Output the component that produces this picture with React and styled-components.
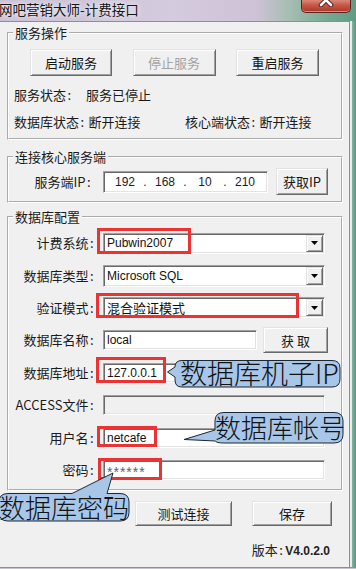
import React from 'react';
import styled, { createGlobalStyle, css } from 'styled-components';

const GlobalStyle = createGlobalStyle`
  html, body {
    margin: 0;
    padding: 0;
    background: #f0f0f0;
    overflow: hidden;
  }
`;

const ui = `"Noto Sans CJK SC", "Liberation Sans", sans-serif`;
const latin = `"Liberation Sans", "Noto Sans CJK SC", sans-serif`;

const Window = styled.div`
  width: 356px;
  height: 569px;
  display: flex;
  flex-direction: column;
  background: linear-gradient(90deg, #c7bed3 0%, #d5cbde 48%, #cec2d6 72%, #a7beb3 81%, #76a894 92%, #5f9c86 100%);
  font-family: ${ui};
  color: #1b1b1b;
  overflow: hidden;
`;

const TitleBar = styled.div`
  flex: none;
  height: 21px;
  display: flex;
  align-items: flex-start;
  justify-content: space-between;
`;

const Title = styled.div`
  margin: 1px 0 0 -1px;
  font-size: 13.5px;
  line-height: 17px;
  color: #161616;
  white-space: nowrap;
  text-shadow: 0 0 5px rgba(255, 255, 255, 0.9), 0 0 9px rgba(255, 255, 255, 0.7);
`;

const CloseButton = styled.div`
  width: 50px;
  height: 13px;
  margin-right: 5px;
  box-sizing: border-box;
  border: 1px solid #5e2520;
  border-top: none;
  border-radius: 0 0 5px 5px;
  background: linear-gradient(#d98878, #c65646 45%, #a83626);
  box-shadow: inset 0 -1px 0 rgba(255, 190, 170, 0.6);
  display: flex;
  justify-content: center;
  overflow: hidden;
`;

const Frame = styled.div`
  flex: 1;
  display: flex;
  min-height: 0;
`;

const Client = styled.div`
  width: 350px;
  box-sizing: border-box;
  background: #f0f0f0;
  border-top: 1px solid #8f8c9c;
  border-right: 1px solid #8f8c9c;
  padding-left: 7px;
`;

const SideFrame = styled.div`
  flex: 1;
  background: linear-gradient(90deg, #e8edeb 0 2px, #86b4a3 2px, #4e9880);
`;

const BottomFrame = styled.div`
  flex: none;
  height: 1px;
  border-top: 1px solid #8f8c9c;
  background: #c9c0d3;
`;

const Group = styled.fieldset`
  width: 336px;
  box-sizing: border-box;
  margin: ${p => p.$mt}px 0 0;
  padding: 0;
  min-width: 0;
  border: 2px groove #fff;
`;

const Legend = styled.legend`
  margin-left: 4px;
  padding: 0 2px;
  font-size: 13px;
  line-height: 16px;
`;

const ActionBar = styled.div`
  display: flex;
  gap: 20.5px;
  padding: 8px 0 0 21px;
`;

const Button = styled.button`
  width: ${p => p.$w}px;
  height: ${p => p.$h}px;
  box-sizing: border-box;
  padding: 0;
  margin: 0;
  font-family: ${ui};
  font-size: 13px;
  color: ${p => (p.disabled ? '#a3a3a3' : '#151515')};
  background: #f0f0f0;
  border: 1px solid;
  border-color: #e3e3e3 #696969 #696969 #e3e3e3;
  box-shadow: inset 1px 1px 0 #fff, inset -1px -1px 0 #a0a0a0;
  flex: none;
`;

const StatusRow = styled.div`
  display: flex;
  margin-top: ${p => p.$mt}px;
  padding-left: 5px;
  padding-bottom: ${p => p.$pb || 0}px;
  font-size: 13px;
  line-height: 20px;
  white-space: nowrap;
`;

const StatusCell = styled.span`
  width: ${p => (p.$w ? `${p.$w}px` : 'auto')};
  flex: none;
`;

const Colon = styled.span`
  display: inline-block;
  width: 6.5px;
  text-align: center;
  margin-right: ${p => p.$gap || 0}px;
`;

const IpRow = styled.div`
  display: flex;
  align-items: center;
  padding: 3px 0 6px;
`;

const FormLabel = styled.div`
  width: 86px;
  justify-self: stretch;
  box-sizing: border-box;
  padding-right: ${p => p.$pr || 0}px;
  text-align: right;
  font-size: 13px;
  line-height: 16px;
  white-space: nowrap;
`;

const sunken = css`
  box-sizing: border-box;
  border: 1px solid;
  border-color: #a0a0a0 #fff #fff #a0a0a0;
  box-shadow: inset 1px 1px 0 #696969, inset -1px -1px 0 #e3e3e3;
  padding: 1px;
`;

const IpBox = styled.div`
  ${sunken}
  width: 165px;
  height: 22px;
  margin-left: 8px;
  padding-left: 6px;
  display: flex;
  align-items: center;
  background: #fff;
  font: 12px/1 ${latin};
  color: #1c1c28;
`;

const Octet = styled.span`
  width: 30px;
  text-align: center;
`;

const Dot = styled.span`
  width: 10px;
  text-align: center;
`;

const Form = styled.div`
  display: grid;
  grid-template-columns: 86px auto;
  grid-auto-rows: 32.4px;
  column-gap: 8px;
  align-items: center;
  justify-items: start;
  padding: 2px 0 3px;
`;

const Anchor = styled.div`
  position: relative;
  display: flex;
  align-items: center;
  gap: 6px;
`;

const Combo = styled.div`
  ${sunken}
  width: 222px;
  height: ${p => p.$h}px;
  display: flex;
  background: #fff;
`;

const FieldValue = styled.div`
  flex: 1;
  display: flex;
  align-items: center;
  position: relative;
  top: ${p => p.$drop || 0}px;
  padding-left: 2px;
  font-family: ${latin};
  font-size: ${p => p.$size || 12}px;
  letter-spacing: ${p => p.$spacing || 0}px;
  color: ${p => p.$color || '#111'};
  white-space: nowrap;
`;

const DropButton = styled.div`
  width: 17px;
  box-sizing: border-box;
  display: flex;
  align-items: center;
  justify-content: center;
  background: #f0f0f0;
  border: 1px solid;
  border-color: #e3e3e3 #696969 #696969 #e3e3e3;
  box-shadow: inset 1px 1px 0 #fff, inset -1px -1px 0 #a0a0a0;
`;

const TextField = styled.div`
  ${sunken}
  width: ${p => p.$w}px;
  height: 20px;
  display: flex;
  background: ${p => (p.$disabled ? '#f0f0f0' : '#fff')};
`;

const Highlight = styled.div`
  position: absolute;
  left: ${p => p.$x}px;
  top: ${p => p.$y}px;
  width: ${p => p.$w}px;
  height: ${p => p.$h}px;
  box-sizing: border-box;
  border: 3px solid #ec3333;
  pointer-events: none;
`;

const CalloutBox = styled.div`
  position: absolute;
  left: ${p => p.$x}px;
  top: ${p => p.$y}px;
  width: ${p => p.$w}px;
  height: ${p => p.$h}px;
  z-index: 2;
  pointer-events: none;
`;

const Bubble = styled.svg`
  position: absolute;
  left: 0;
  top: 0;
  overflow: visible;
`;

const CalloutText = styled.div`
  position: absolute;
  left: ${p => p.$tx}px;
  top: ${p => p.$ty}px;
  font-family: ${ui};
  font-weight: 300;
  font-size: ${p => p.$size}px;
  line-height: 1;
  color: #121212;
  white-space: nowrap;
`;

const ButtonRow = styled.div`
  display: flex;
  justify-content: flex-end;
  gap: 20px;
  margin-top: 10px;
  padding-right: 17px;
`;

const Version = styled.div`
  display: flex;
  justify-content: flex-end;
  align-items: baseline;
  margin-top: 16px;
  padding-right: 19px;
  font-size: 13px;
  line-height: 16px;
  color: #222;
`;

const VersionNumber = styled.span`
  margin-left: 1px;
  font: bold 12px ${latin};
`;

const Arrow = () => (
  <svg width="7" height="4" viewBox="0 0 7 4">
    <path d="M0 0h7L3.5 4z" fill="#000" />
  </svg>
);

const Label = ({ text, pr }) => (
  <FormLabel $pr={pr}>
    {text}
    <Colon>:</Colon>
  </FormLabel>
);

const ComboBox = ({ value, h = 21, size }) => (
  <Combo $h={h}>
    <FieldValue $size={size}>{value}</FieldValue>
    <DropButton>
      <Arrow />
    </DropButton>
  </Combo>
);

const Callout = ({ x, y, w, h, d, tx, ty, size, children }) => (
  <CalloutBox $x={x} $y={y} $w={w} $h={h}>
    <Bubble width={w} height={h} viewBox={`0 0 ${w} ${h}`}>
      <path d={d} fill="#a7c6e8" stroke="#1d2733" strokeWidth="1" />
    </Bubble>
    <CalloutText $tx={tx} $ty={ty} $size={size}>{children}</CalloutText>
  </CalloutBox>
);

export default function App() {
  return (
    <>
      <GlobalStyle />
      <Window>
        <TitleBar>
          <Title>网吧营销大师-计费接口</Title>
          <CloseButton>
            <svg width="16" height="14" viewBox="0 0 16 14" style={{ marginTop: -7 }}>
              <path d="M3 2l10 10M13 2L3 12" stroke="#4a1a14" strokeWidth="4.5" strokeLinecap="round" />
              <path d="M3 2l10 10M13 2L3 12" stroke="#fff" strokeWidth="2.6" strokeLinecap="round" />
            </svg>
          </CloseButton>
        </TitleBar>

        <Frame>
          <Client>
            <Group $mt={3}>
              <Legend>服务操作</Legend>
              <ActionBar>
                <Button $w={82} $h={27}>启动服务</Button>
                <Button $w={83} $h={27} disabled>停止服务</Button>
                <Button $w={83} $h={27}>重启服务</Button>
              </ActionBar>
              <StatusRow $mt={9}>
                <StatusCell $w={72}>服务状态<Colon>:</Colon></StatusCell>
                <StatusCell>服务已停止</StatusCell>
              </StatusRow>
              <StatusRow $mt={7} $pb={6}>
                <StatusCell $w={171}>数据库状态<Colon $gap={3}>:</Colon>断开连接</StatusCell>
                <StatusCell>核心端状态<Colon $gap={3}>:</Colon>断开连接</StatusCell>
              </StatusRow>
            </Group>

            <Group $mt={9}>
              <Legend>连接核心服务端</Legend>
              <IpRow>
                <Label text="服务端IP" pr={3} />
                <IpBox>
                  <Octet>192</Octet>
                  <Dot>.</Dot>
                  <Octet>168</Octet>
                  <Dot>.</Dot>
                  <Octet>10</Octet>
                  <Dot>.</Dot>
                  <Octet>210</Octet>
                </IpBox>
                <Button $w={52} $h={27} style={{ marginLeft: 8 }}>获取IP</Button>
              </IpRow>
            </Group>

            <Group $mt={6}>
              <Legend>数据库配置</Legend>
              <Form>
                <Label text="计费系统" />
                <Anchor>
                  <ComboBox value="Pubwin2007" />
                  <Highlight $x={-6} $y={-5} $w={94} $h={26} />
                </Anchor>

                <Label text="数据库类型" />
                <Anchor>
                  <ComboBox value="Microsoft SQL" h={22} />
                </Anchor>

                <Label text="验证模式" />
                <Anchor>
                  <ComboBox value="混合验证模式" size={13} />
                  <Highlight $x={-7} $y={-4} $w={203} $h={25} />
                </Anchor>

                <Label text="数据库名称" />
                <Anchor>
                  <TextField $w={154}>
                    <FieldValue>local</FieldValue>
                  </TextField>
                  <Button $w={65} $h={26}>获 取</Button>
                </Anchor>

                <Label text="数据库地址" />
                <Anchor>
                  <TextField $w={154}>
                    <FieldValue>127.0.0.1</FieldValue>
                  </TextField>
                  <Highlight $x={-7} $y={-6} $w={70} $h={26} />
                  <Callout
                    x={63} y={-5} w={176} h={32}
                    d="M16 2.5H166Q174 2.5 174 10V21Q174 29 166 29H16Q9 29 9 22V19L1.5 14L9 9Q9 2.5 16 2.5Z"
                    tx={14} ty={1} size={27}
                  >
                    数据库机子IP
                  </Callout>
                </Anchor>

                <Label text="ACCESS文件" />
                <Anchor>
                  <TextField $w={222} $disabled />
                </Anchor>

                <Label text="用户名" />
                <Anchor>
                  <TextField $w={222}>
                    <FieldValue>netcafe</FieldValue>
                  </TextField>
                  <Highlight $x={-6} $y={-2} $w={60} $h={21} />
                  <Callout
                    x={79} y={-18} w={164} h={36}
                    d="M42 2.5H152Q161 2.5 161 11V24.5Q161 33 152 33H42Q34 33 33.5 31L2 29.5L33 20V11Q33 2.5 42 2.5Z"
                    tx={33} ty={4} size={26}
                  >
                    数据库帐号
                  </Callout>
                </Anchor>

                <Label text="密码" />
                <Anchor>
                  <TextField $w={222}>
                    <FieldValue $color="#5a5f78" $size={14} $spacing={1} $drop={2}>******</FieldValue>
                  </TextField>
                  <Highlight $x={-5} $y={-2} $w={64} $h={22} />
                  <Callout
                    x={-105} y={11} w={134} h={53}
                    d="M10 22.5H74L115 2L109 22.5H122Q131 22.5 131 31V41.5Q131 50 122 50H10Q1 50 1 41.5V31Q1 22.5 10 22.5Z"
                    tx={1} ty={23} size={26}
                  >
                    数据库密码
                  </Callout>
                </Anchor>
              </Form>
            </Group>

            <ButtonRow>
              <Button $w={97} $h={25}>测试连接</Button>
              <Button $w={80} $h={25}>保存</Button>
            </ButtonRow>

            <Version>
              版本<Colon>:</Colon><VersionNumber>V4.0.2.0</VersionNumber>
            </Version>
          </Client>
          <SideFrame />
        </Frame>
        <BottomFrame />
      </Window>
    </>
  );
}
